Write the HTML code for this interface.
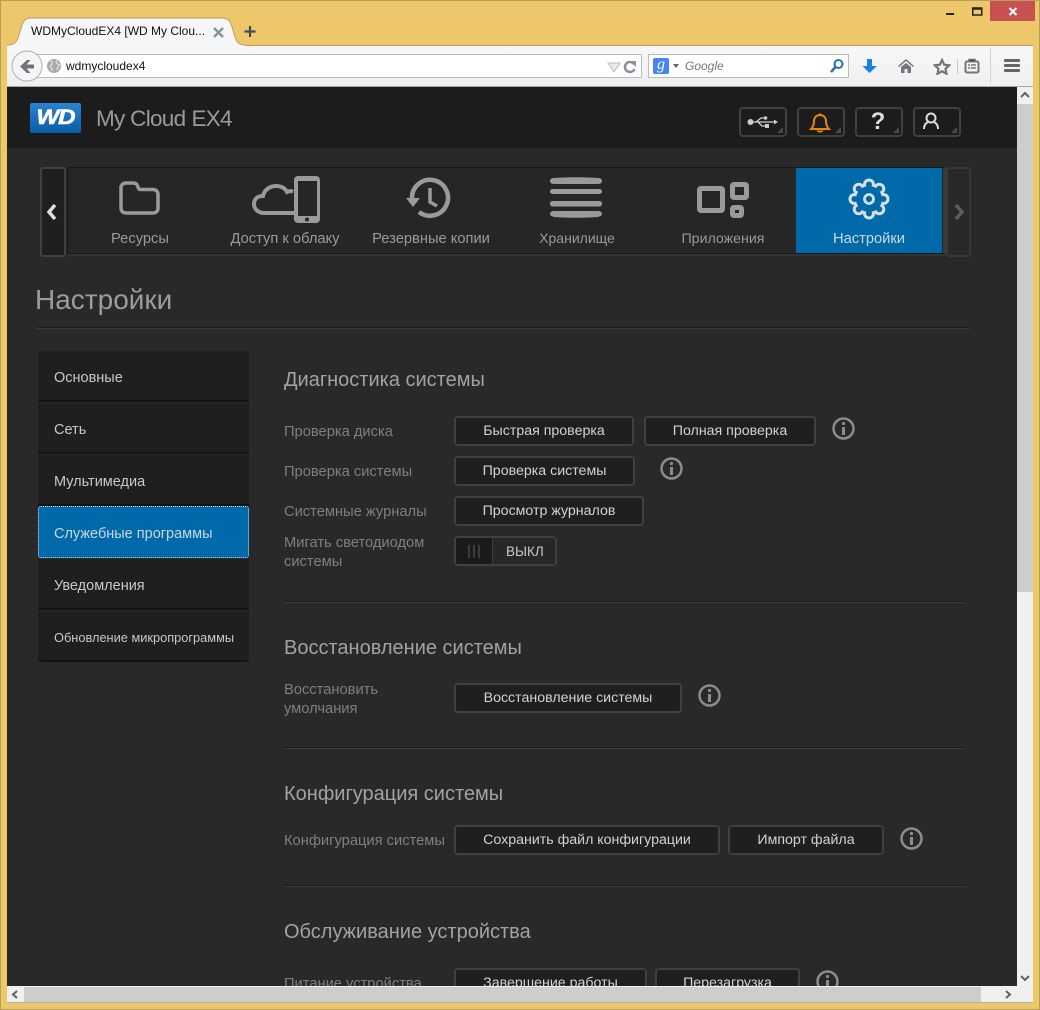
<!DOCTYPE html>
<html><head><meta charset="utf-8"><style>
html,body{margin:0;padding:0;width:1040px;height:1010px;overflow:hidden;background:#efc76b;font-family:"Liberation Sans",sans-serif}
.a,.b,.l,.h,.m,.t,.hb,.ic{position:absolute;white-space:nowrap}
.b{box-sizing:border-box;height:30px;background:#1f1f1f;border:2px solid #404040;border-radius:4px;color:#d2d2d2;font-size:14.2px;line-height:27px;text-align:center}
.l{color:#7f7f7f;font-size:14.7px;line-height:19px;left:284px;margin-top:1px}
.h{color:#a2a2a2;font-size:20px;line-height:22px;left:284px;margin-top:1px}
.m{left:38px;width:211px;height:51px;box-sizing:border-box;background:#1f1f1f;border-bottom:2px solid #141414;color:#c8c8c8;font-size:14.5px;line-height:55px;padding-left:16px}
.t{top:230px;color:#9a9a9a;font-size:14.7px;line-height:18px;text-align:center}
.hr{position:absolute;left:284px;width:681px;height:1px;background:#1c1c1c;border-bottom:1px solid #3c3c3c}
.hb{top:107px;width:48px;height:30px;box-sizing:border-box;border:2px solid #404040;border-radius:4px;background:#1c1c1c}
.hb:after{content:"";position:absolute;right:2px;bottom:2px;border:3px solid transparent;border-right-color:#4a4a4a;border-bottom-color:#4a4a4a}
.ic{width:24px;height:24px}
</style></head><body>
<!-- window frame -->
<div class="a" style="left:0;top:0;width:1038px;height:1008px;border:1px solid #b89e5a"></div>
<div class="a" style="left:990px;top:1px;width:45px;height:20px;background:#c75050"></div>
<svg class="a" style="left:940px;top:0" width="100" height="22"><rect x="6" y="13" width="8" height="2" fill="#222"/><rect x="32.750" y="8.500" width="9" height="6.500" fill="none" stroke="#222" stroke-width="1.500"/><path d="M32 8.500h10.500" stroke="#222" stroke-width="2.500"/><path d="M69.500 8l7 7M76.500 8l-7 7" stroke="#fff" stroke-width="2"/></svg>
<!-- toolbar -->
<div class="a" style="left:7px;top:45px;width:1026px;height:42px;background:linear-gradient(#f8f8f8,#efefef);border-top:1px solid #b89e5a;border-bottom:1px solid #a8a8a8;box-sizing:border-box"></div>
<!-- tab -->
<svg class="a" style="left:0;top:0" width="260" height="48"><path d="M7 46V45C13 45 16 43 18 38L22 25C24 20 26 18 31 18H221C227 18 230 20 232 27L235 37C237 43 240 45 245 45V47H7Z" fill="#f5f6f7"/><path d="M7 45C13 45 16 43 18 38L22 25C24 20 26 18 31 18H221C227 18 230 20 232 27L235 37C237 43 240 45 245 45" fill="none" stroke="#b89e5a"/></svg>
<div class="a" style="left:31px;top:23px;font-size:12px;line-height:17px;color:#111">WDMyCloudEX4 [WD My Clou...</div>
<svg class="a" style="left:212px;top:26px" width="14" height="14"><path d="M2 2l9 9M11 2l-9 9" stroke="#8a919a" stroke-width="2.500"/></svg>
<svg class="a" style="left:243px;top:25px" width="14" height="14"><path d="M7 1v11M1.500 6.500h11" stroke="#3c4a5c" stroke-width="2.200"/></svg>
<div class="a" style="left:30px;top:54px;width:612px;height:24px;background:#fff;border:1px solid #b5bcc4;box-sizing:border-box"></div>
<svg class="a" style="left:11px;top:50px" width="32" height="32"><circle cx="16" cy="16" r="15" fill="#f5f5f5" stroke="#b0b0b0"/><path d="M16 10L9 16.500 16 23h3.500l-4-4.500H23v-4h-7.500l4-4.500z" fill="#6e747c"/></svg>
<svg class="a" style="left:47px;top:59px" width="14" height="14"><circle cx="7" cy="7" r="7" fill="#a9a9a9"/><path d="M3 2c3 0 3 3 1 4s2 3 1 6M10 1c-2 3 0 4 3 5-2 1-3 3-3 5" stroke="#d8d8d8" fill="none" stroke-width="1.500"/></svg>
<div class="a" style="left:66px;top:59px;font-size:12px;line-height:15px;color:#111">wdmycloudex4</div>
<svg class="a" style="left:606px;top:60px" width="34" height="14"><path d="M2 3h12l-6 9z" fill="#e8eaec" stroke="#b6bcc2"/><path d="M28 4A5 5 0 1 0 28.500 9" fill="none" stroke="#8a9198" stroke-width="2.500"/><path d="M24 1h6v6z" fill="#8a9198"/></svg>
<div class="a" style="left:648px;top:54px;width:201px;height:24px;background:#fff;border:1px solid #b5bcc4;box-sizing:border-box"></div>
<div class="a" style="left:653px;top:58px;width:16px;height:16px;background:#4285f4;border-radius:2px;color:#fff;font:italic 16px/14px 'Liberation Serif',serif;text-align:center">g</div>
<svg class="a" style="left:672px;top:63px" width="8" height="6"><path d="M1 1h6l-3 4z" fill="#666"/></svg>
<div class="a" style="left:685px;top:59px;font:italic 12px/15px 'Liberation Sans',sans-serif;color:#777">Google</div>
<svg class="a" style="left:829px;top:58px" width="16" height="16"><circle cx="9.500" cy="6" r="4" fill="none" stroke="#2a6fb0" stroke-width="2"/><path d="M6.500 9L2 14" stroke="#2a6fb0" stroke-width="2.500"/></svg>
<svg class="a" style="left:862px;top:58px" width="16" height="16"><path d="M5 1h5v7h5l-7.500 7L0.500 8H5z" fill="#1b7fe6"/></svg>
<svg class="a" style="left:897px;top:58px" width="18" height="16"><path d="M9 1L1 8l1 1 7-6 7 6 1-1z M4 9l5-4 5 4v6h-3.500v-4h-3v4H4z" fill="#70767c"/></svg>
<svg class="a" style="left:933px;top:58px" width="18" height="17"><path d="M9 2l2.200 4.700 5 .6-3.700 3.500 1 5L9 13.300 4.500 15.800l1-5L1.800 7.300l5-.6z" fill="none" stroke="#70767c" stroke-width="2.200"/></svg>
<div class="a" style="left:957px;top:59px;width:1px;height:15px;background:#c8c8c8"></div>
<svg class="a" style="left:964px;top:58px" width="16" height="16"><rect x="1.500" y="3.500" width="13" height="11" rx="1.500" fill="none" stroke="#70767c" stroke-width="2"/><path d="M5 1.500h6v2H5zM4 7h2M7 7h5M4 10h2M7 10h5" stroke="#70767c" stroke-width="1.500"/></svg>
<div class="a" style="left:990px;top:48px;width:1px;height:36px;background:#d2d2d2"></div>
<div class="a" style="left:1004px;top:59px;width:16px;height:3px;background:#666;box-shadow:0 5px 0 #666,0 10px 0 #666;border-radius:1px"></div>

<!-- viewport -->
<div class="a" style="left:7px;top:87px;width:1010px;height:899px;background:#292929;overflow:hidden">
<div class="a" style="left:0;top:0;width:1010px;height:61px;background:#1c1c1c"></div>
</div>
<!-- scrollbars -->
<div class="a" style="left:1017px;top:87px;width:16px;height:899px;background:#f0f0f0"></div>
<div class="a" style="left:1017px;top:104px;width:16px;height:488px;background:#cdcdcd"></div>
<svg class="a" style="left:1017px;top:87px" width="16" height="16"><path d="M4 10l4-4 4 4" fill="none" stroke="#606060" stroke-width="2"/></svg>
<svg class="a" style="left:1017px;top:970px" width="16" height="16"><path d="M4 6l4 4 4-4" fill="none" stroke="#606060" stroke-width="2"/></svg>
<div class="a" style="left:7px;top:986px;width:1026px;height:17px;background:#f0f0f0;border-bottom:1px solid #b0b0b0;box-sizing:border-box"></div>
<div class="a" style="left:24px;top:987px;width:957px;height:15px;background:#cdcdcd"></div>
<svg class="a" style="left:7px;top:987px" width="16" height="15"><path d="M10 4L6 7.500l4 3.500" fill="none" stroke="#606060" stroke-width="2"/></svg>
<svg class="a" style="left:1000px;top:987px" width="16" height="15"><path d="M6 4l4 3.500L6 11" fill="none" stroke="#606060" stroke-width="2"/></svg>

<!-- header -->
<div class="a" style="left:30px;top:103px;width:51px;height:30px;border-radius:2px;background:linear-gradient(#2a84d0,#0c5ca8)"></div>
<div class="a" style="left:30px;top:103px;width:51px;color:#fff;font:italic bold 21px/30px 'Liberation Sans',sans-serif;text-align:center;letter-spacing:-1px;-webkit-text-stroke:.6px #fff;transform:scaleX(1.15)">WD</div>
<div class="a" style="left:96px;top:105px;font-size:22.500px;line-height:28px;color:#9b9b9b;letter-spacing:-.7px">My Cloud<span style="margin-left:6px">EX4</span></div>

<div class="hb" style="left:739px"></div>
<div class="hb" style="left:797px"></div>
<div class="hb" style="left:855px"></div>
<div class="hb" style="left:913px"></div>
<svg class="a" style="left:747px;top:113px" width="32" height="18"><circle cx="3.500" cy="9" r="3" fill="#ccc"/><path d="M4 9h24M9 9l5-4h4M11 9l4 4h4" stroke="#ccc" stroke-width="1.300" fill="none"/><path d="M31 9l-4-2.500v5z" fill="#ccc"/><circle cx="18.500" cy="5" r="1.800" fill="#ccc"/><rect x="18" y="11" width="4" height="4" fill="#ccc"/></svg>
<svg class="a" style="left:809px;top:112px" width="22" height="21"><path d="M2 17c2-2 3-4 3-8 0-3.500 2.500-6 6-6s6 2.500 6 6c0 4 1 6 3 8z" fill="none" stroke="#e8830f" stroke-width="2"/><path d="M8 18.500c1 2 5 2 6 0" fill="#e8830f" stroke="#e8830f"/><circle cx="11" cy="2.500" r="1.300" fill="#e8830f"/></svg>
<div class="a" style="left:866px;top:108px;width:24px;text-align:center;font-size:24px;line-height:28px;font-weight:bold;color:#ddd">?</div>
<svg class="a" style="left:921px;top:111px" width="22" height="20"><circle cx="10" cy="7" r="4.500" fill="none" stroke="#ddd" stroke-width="2"/><path d="M3 18c0-4 2-6 4-7M17 18c0-4-2-6-4-7" fill="none" stroke="#ddd" stroke-width="2"/></svg>

<!-- nav -->
<div class="a" style="left:40px;top:167px;width:26px;height:90px;box-sizing:border-box;border:2px solid #404040;border-radius:3px;background:#1f1f1f"></div>
<svg class="a" style="left:44px;top:202px" width="16" height="20"><path d="M11 3L5 10l6 7" fill="none" stroke="#ddd" stroke-width="3.500"/></svg>
<div class="a" style="left:67px;top:167px;width:879px;height:87px;box-sizing:border-box;background:#262626;border:1px solid #161616;border-right:3px solid #3a3a3a;box-shadow:0 2px 0 #333"></div>
<div class="a" style="left:796px;top:168px;width:146px;height:85px;background:#0069aa"></div>
<div class="a" style="left:946px;top:167px;width:25px;height:90px;box-sizing:border-box;border:2px solid #383838;border-radius:3px;background:#292929"></div>
<svg class="a" style="left:951px;top:202px" width="16" height="20"><path d="M5 3l6 7-6 7" fill="none" stroke="#5e5e5e" stroke-width="3.500"/></svg>

<svg class="a" style="left:118px;top:180px" width="44" height="37"><path d="M3 13V8c0-3 2-5 5-5h7c3 0 4 1 5 4 .5 2 1 2.500 3 2.500H35c3 0 5 2 5 5V28c0 3-2 5-5 5H8c-3 0-5-2-5-5z" fill="none" stroke="#9a9a9a" stroke-width="3.500"/></svg>
<svg class="a" style="left:252px;top:175px" width="70" height="50"><path d="M27 38H12c-5 0-10-3.500-10-9s4-8 9-8c1-6 7-10 13-10 5 0 9 2 11 6 2-1 4-1 6-.5" fill="none" stroke="#9a9a9a" stroke-width="4"/><path d="M27 38h16" stroke="#9a9a9a" stroke-width="4"/><rect x="42" y="1" width="26" height="47" rx="4" fill="#9a9a9a"/><rect x="46" y="6" width="19" height="35" fill="#262626"/><circle cx="55" cy="44.500" r="2" fill="#262626"/></svg>
<svg class="a" style="left:404px;top:177px" width="48" height="44"><path d="M8 21A18 18 0 1 1 15 35" fill="none" stroke="#9a9a9a" stroke-width="4.500"/><path d="M2 21h14l-7 9z" fill="#9a9a9a"/><path d="M26 11V25L33 29" fill="none" stroke="#9a9a9a" stroke-width="3.500"/></svg>
<svg class="a" style="left:549px;top:177px" width="56" height="42"><path d="M1 4c0-2 2-3 4-3 15-1 29-1 44 0 2 0 4 1 4 3s-2 3-4 3H5C3 7 1 6 1 4z" fill="#9a9a9a"/><rect x="1" y="12" width="52" height="5" rx="2.500" fill="#9a9a9a"/><rect x="1" y="24" width="52" height="5.500" rx="2.500" fill="#9a9a9a"/><path d="M1 37c0-2 2-3 4-3h44c2 0 4 1 4 3s-2 2-4 3c-15 1-29 1-44 0-2-1-4-1-4-3z" fill="#9a9a9a"/></svg>
<svg class="a" style="left:695px;top:180px" width="56" height="40"><rect x="4.500" y="8.500" width="23" height="22" rx="1.500" fill="none" stroke="#9a9a9a" stroke-width="5"/><rect x="37.500" y="4.500" width="14" height="13" rx="1.500" fill="none" stroke="#9a9a9a" stroke-width="5"/><rect x="37.500" y="27.500" width="9" height="8" rx="1.500" fill="none" stroke="#9a9a9a" stroke-width="5"/></svg>
<svg class="a" style="left:848px;top:178px" width="42" height="42"><g fill="none" stroke="#d8dfe4" stroke-width="3"><circle cx="21" cy="6.500" r="4.500"/><circle cx="21" cy="6.500" r="4.500" transform="rotate(45 21 21)"/><circle cx="21" cy="6.500" r="4.500" transform="rotate(90 21 21)"/><circle cx="21" cy="6.500" r="4.500" transform="rotate(135 21 21)"/><circle cx="21" cy="6.500" r="4.500" transform="rotate(180 21 21)"/><circle cx="21" cy="6.500" r="4.500" transform="rotate(225 21 21)"/><circle cx="21" cy="6.500" r="4.500" transform="rotate(270 21 21)"/><circle cx="21" cy="6.500" r="4.500" transform="rotate(315 21 21)"/></g><circle cx="21" cy="21" r="13" fill="#0069aa"/><circle cx="21" cy="21" r="4.500" fill="none" stroke="#d8dfe4" stroke-width="2.800"/></svg>

<div class="t" style="left:80px;width:120px">Ресурсы</div>
<div class="t" style="left:215px;width:140px">Доступ к облаку</div>
<div class="t" style="left:361px;width:140px">Резервные копии</div>
<div class="t" style="left:507px;width:140px;font-size:14px;top:229px">Хранилище</div>
<div class="t" style="left:653px;width:140px;font-size:14.200px">Приложения</div>
<div class="t" style="left:799px;width:140px;color:#ccd9e3">Настройки</div>

<div class="a" style="left:35px;top:283px;font-size:28px;line-height:34px;color:#9c9c9c">Настройки</div>
<div class="a" style="left:37px;top:327px;width:933px;height:1px;background:#1c1c1c;border-bottom:1px solid #3a3a3a"></div>

<!-- side menu -->
<div class="m" style="top:351px;border-radius:4px 4px 0 0">Основные</div>
<div class="m" style="top:403px">Сеть</div>
<div class="m" style="top:455px">Мультимедиа</div>
<div class="m" style="top:506px;height:52px;background:#0069aa;border:1px dotted #cfe0ec;border-radius:3px;line-height:54px;padding-left:15px;color:#c6d6e2">Служебные программы</div>
<div class="m" style="top:559px">Уведомления</div>
<div class="m" style="top:611px;height:51px;font-size:12.800px;line-height:53px;border-radius:0 0 4px 4px">Обновление микропрограммы</div>

<!-- content -->
<div class="h" style="top:368px">Диагностика системы</div>
<div class="l" style="top:422px">Проверка диска</div>
<div class="b" style="left:454px;top:416px;width:180px">Быстрая проверка</div>
<div class="b" style="left:644px;top:416px;width:172px">Полная проверка</div>
<div class="l" style="top:462px">Проверка системы</div>
<div class="b" style="left:454px;top:456px;width:181px">Проверка системы</div>
<div class="l" style="top:502px">Системные журналы</div>
<div class="b" style="left:454px;top:496px;width:190px">Просмотр журналов</div>
<div class="l" style="top:533px">Мигать светодиодом<br>системы</div>
<div class="a" style="left:454px;top:536px;width:103px;height:30px;box-sizing:border-box;border:2px solid #404040;border-radius:4px;background:#272727;color:#c8c8c8;font-size:13.500px;line-height:28px;padding-left:50px">ВЫКЛ</div>
<div class="a" style="left:456px;top:538px;width:37px;height:26px;background:#1a1a1a;border-right:1px solid #404040;box-sizing:border-box;border-radius:3px 0 0 3px"></div>
<div class="a" style="left:468px;top:545px;width:2px;height:13px;background:#3c3c3c;box-shadow:5px 0 0 #3c3c3c,10px 0 0 #3c3c3c"></div>
<div class="hr" style="top:601px"></div>

<div class="h" style="top:636px">Восстановление системы</div>
<div class="l" style="top:680px">Восстановить<br>умолчания</div>
<div class="b" style="left:454px;top:683px;width:228px">Восстановление системы</div>
<div class="hr" style="top:747px"></div>

<div class="h" style="top:782px">Конфигурация системы</div>
<div class="l" style="top:831px">Конфигурация системы</div>
<div class="b" style="left:454px;top:825px;width:266px">Сохранить файл конфигурации</div>
<div class="b" style="left:728px;top:825px;width:156px">Импорт файла</div>
<div class="hr" style="top:885px"></div>

<div class="h" style="top:920px">Обслуживание устройства</div>
<div class="a" style="left:0;top:0;width:1040px;height:986px;overflow:hidden;pointer-events:none">
<div class="l" style="top:974px">Питание устройства</div>
<div class="b" style="left:454px;top:968px;width:193px">Завершение работы</div>
<div class="b" style="left:655px;top:968px;width:145px">Перезагрузка</div>
<svg class="a" style="left:816px;top:970px" width="24" height="24"><circle cx="11.500" cy="11.500" r="10" fill="none" stroke="#8c8c8c" stroke-width="2.500"/><circle cx="11.500" cy="6.500" r="1.600" fill="#8c8c8c"/><rect x="10" y="10" width="3" height="8" fill="#8c8c8c"/></svg>
</div>

<svg class="ic" style="left:832px;top:417px"><circle cx="11.500" cy="11.500" r="10" fill="none" stroke="#8c8c8c" stroke-width="2.500"/><circle cx="11.500" cy="6.500" r="1.600" fill="#8c8c8c"/><rect x="10" y="10" width="3" height="8" fill="#8c8c8c"/></svg>
<svg class="ic" style="left:660px;top:457px"><circle cx="11.500" cy="11.500" r="10" fill="none" stroke="#8c8c8c" stroke-width="2.500"/><circle cx="11.500" cy="6.500" r="1.600" fill="#8c8c8c"/><rect x="10" y="10" width="3" height="8" fill="#8c8c8c"/></svg>
<svg class="ic" style="left:698px;top:684px"><circle cx="11.500" cy="11.500" r="10" fill="none" stroke="#8c8c8c" stroke-width="2.500"/><circle cx="11.500" cy="6.500" r="1.600" fill="#8c8c8c"/><rect x="10" y="10" width="3" height="8" fill="#8c8c8c"/></svg>
<svg class="ic" style="left:900px;top:827px"><circle cx="11.500" cy="11.500" r="10" fill="none" stroke="#8c8c8c" stroke-width="2.500"/><circle cx="11.500" cy="6.500" r="1.600" fill="#8c8c8c"/><rect x="10" y="10" width="3" height="8" fill="#8c8c8c"/></svg>
</body></html>
